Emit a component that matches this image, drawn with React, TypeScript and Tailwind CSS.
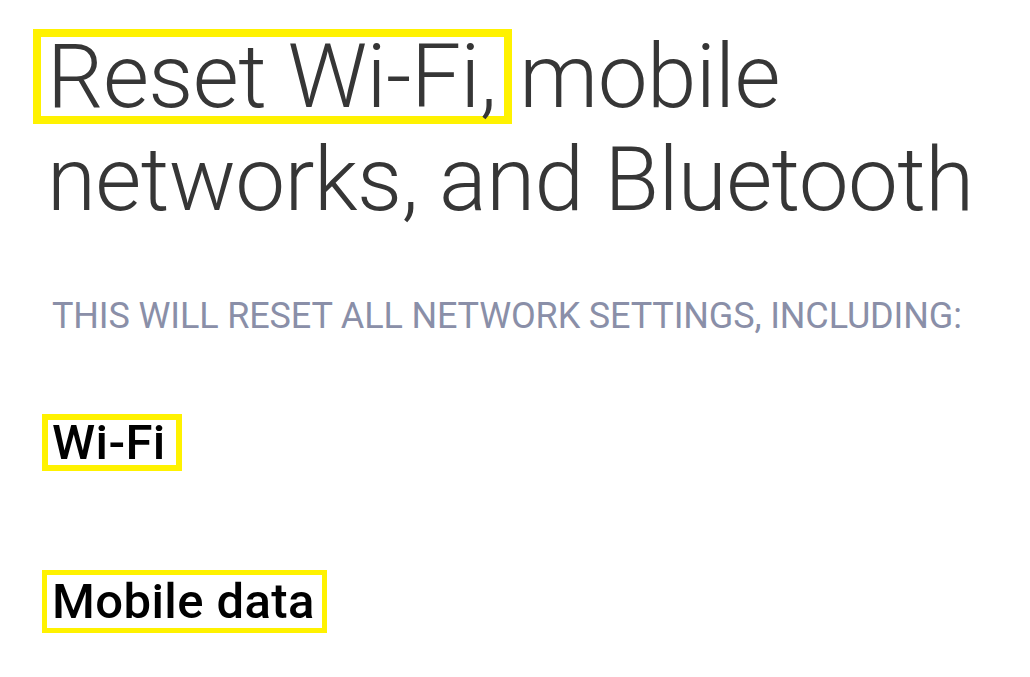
import React from "react";

export default function App() {
  return (
    <div
      className="w-[1030px] h-[677px] bg-white overflow-hidden"
      style={{ fontFamily: "Roboto, 'Noto Sans', sans-serif" }}
    >
      <h1 className="pt-[25px] pl-[47px] text-[89px] font-light leading-[103px] tracking-[-0.6px] text-[#363636] whitespace-nowrap">
        <span className="inline-block -ml-[14px] pl-[6px] pr-[8px] border-[8px] border-[#fff200] leading-[79px] -mr-[14px]">
          Reset Wi-Fi,
        </span>{" "}
        mobile
        <br />
        networks, and Bluetooth
      </h1>
      <p className="mt-[63px] ml-[52px] text-[36px] leading-[44px] tracking-[-0.15px] text-[#8a8fa8] uppercase whitespace-nowrap">
        This will reset all network settings, including:
      </p>
      <div className="mt-[76px] ml-[42px] w-fit border-[6px] border-[#fff200] pl-[4px] pr-[10px] text-[49px] leading-[45px] tracking-[0.4px] font-medium text-black">
        Wi-Fi
      </div>
      <div className="mt-[99px] ml-[42px] w-fit border-[5px] border-[#fff200] pl-[5px] pr-[7px] text-[49px] leading-[53px] tracking-[0.4px] font-medium text-black">
        Mobile data
      </div>
    </div>
  );
}
